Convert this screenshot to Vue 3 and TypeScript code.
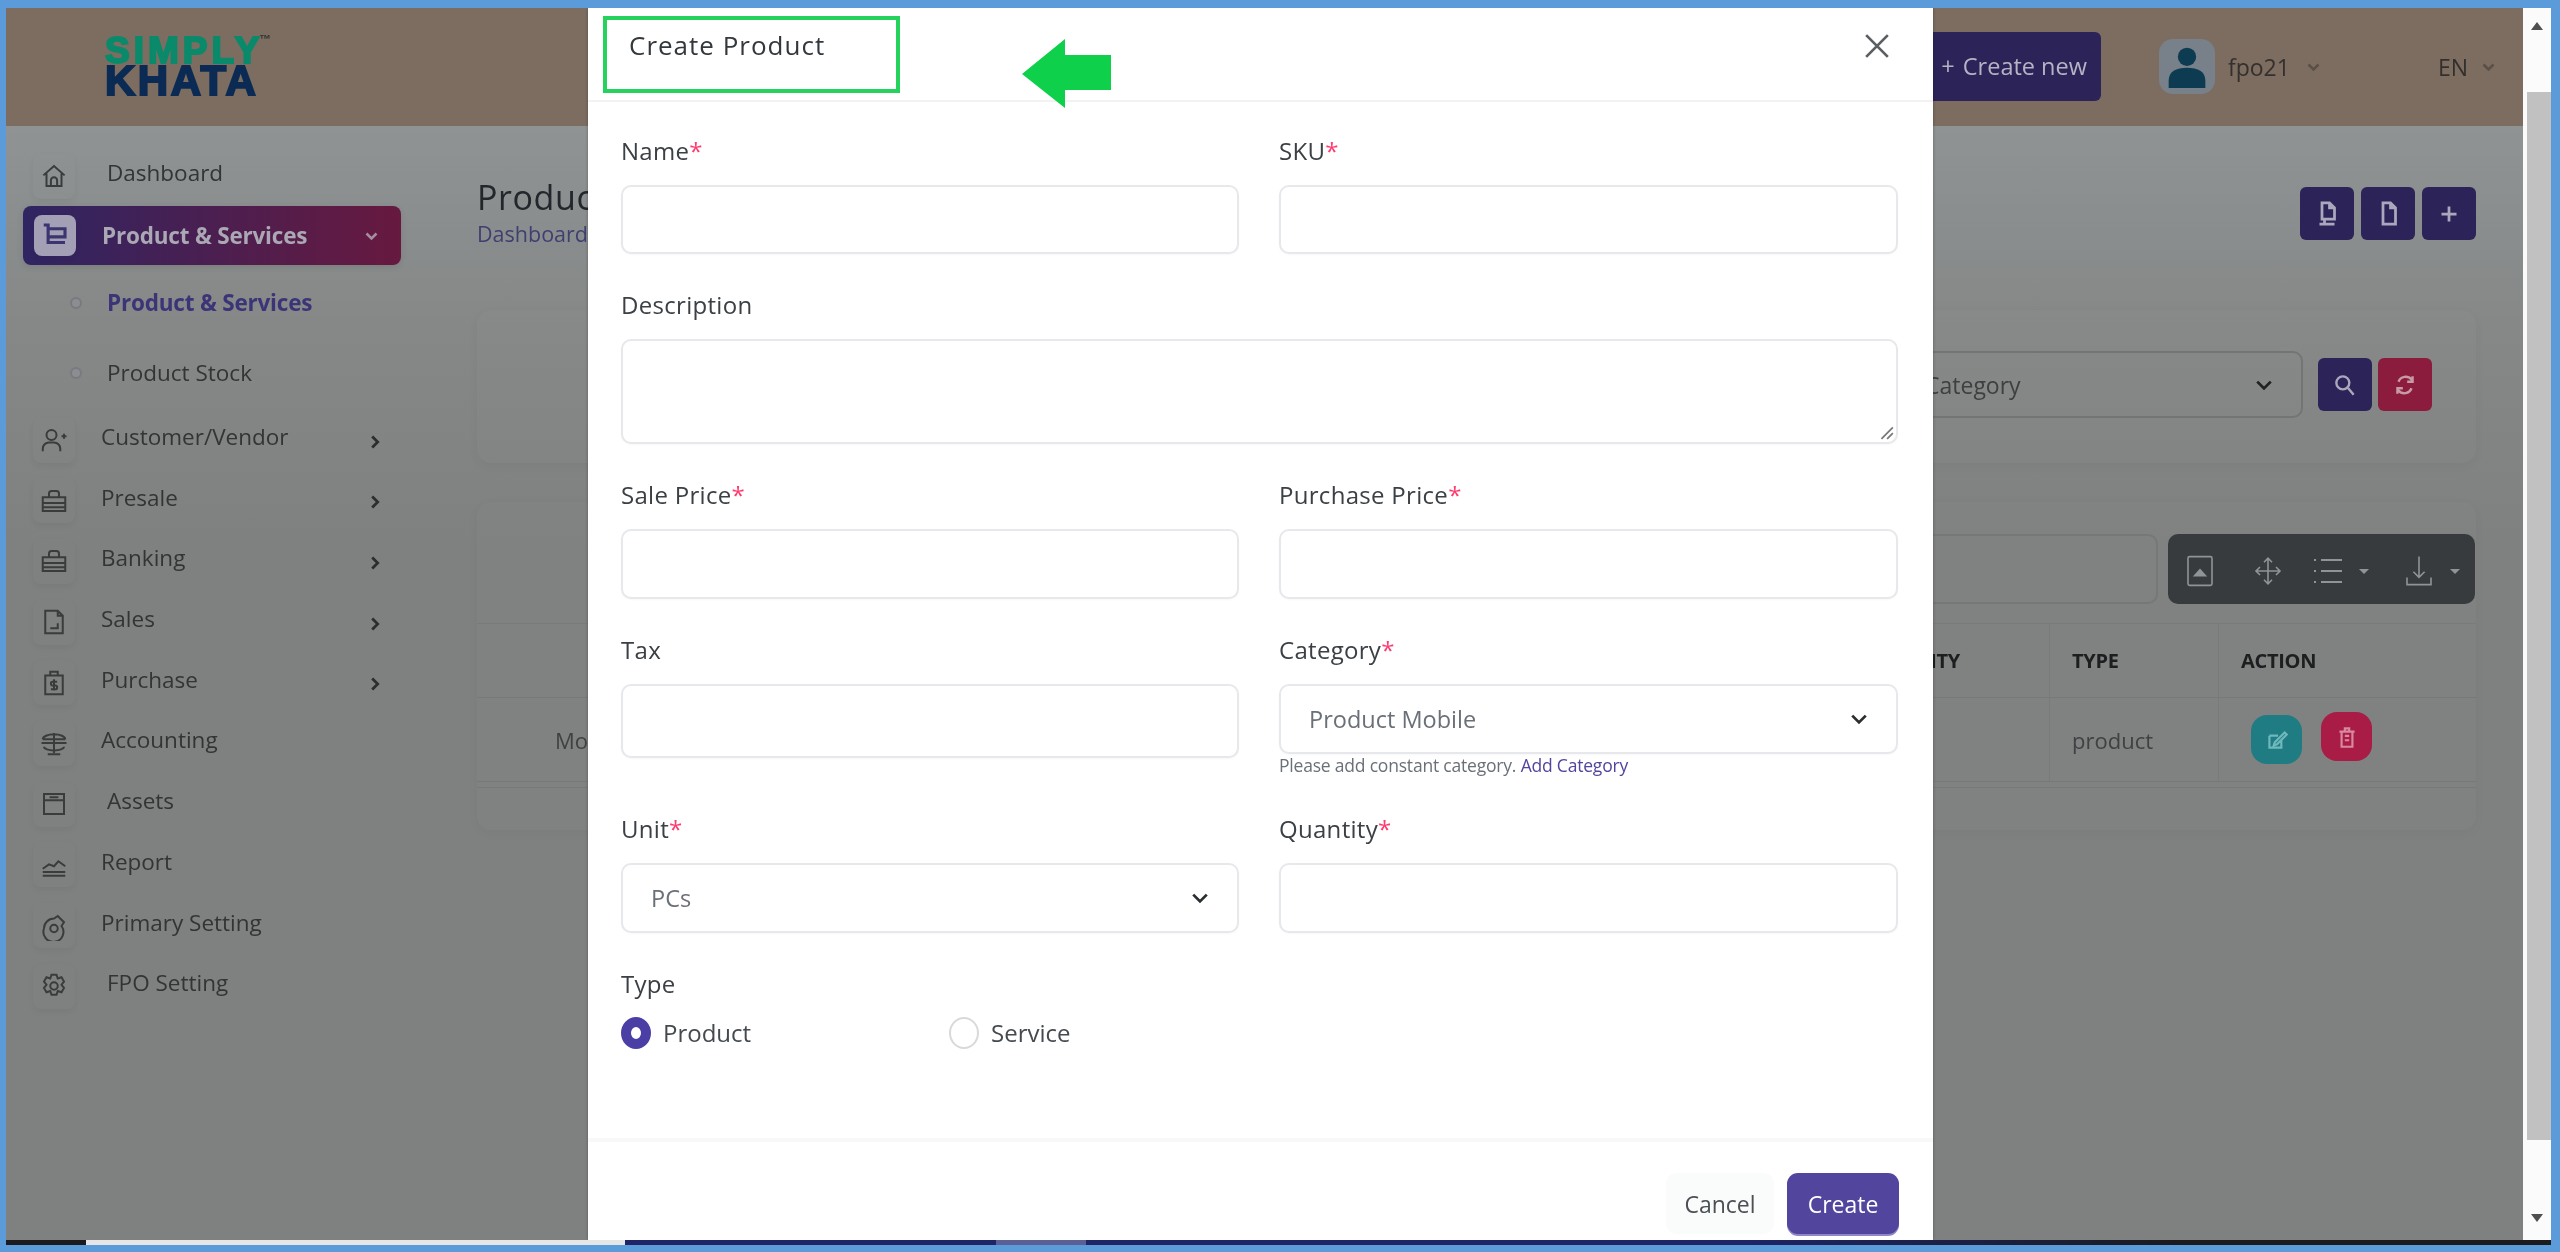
<script setup lang="ts">
const icons: Record<string, string> = {
  home: 'M3.5 11.5 12 4l8.500 7.500M6 10v10h12V10M9.500 20v-4.500a2.500 2.500 0 0 1 5 0V20',
  cart: 'M3 4h3.500v14H20M6.500 7H20v6.500H6.500M8.500 21h.01M17.500 21h.01',
  userplus: 'M6 8a4 4 0 1 0 8 0a4 4 0 1 0-8 0M3 21v-2a5 5 0 0 1 5-5h4a5 5 0 0 1 5 5v2M18 9h4M20 7v4',
  case: 'M3 9h18v11H3zM8 9V6a2 2 0 0 1 2-2h4a2 2 0 0 1 2 2v3M3 13.500h18M3 17h18',
  file: 'M5 3h10l4 4v14H5zM15 3v4h4M9 17h6v-4',
  dollar: 'M5 6h14v15H5zM9 6V3h6v3M12 9v9M14.500 11H11a1.500 1.500 0 0 0 0 3h2a1.500 1.500 0 0 1 0 3H9.500',
  scale: 'M12 4v16M7 21h10M3 9h18M3 9a9 4 0 0 1 18 0M2 12h20M4 15a8 3 0 0 0 16 0',
  assets: 'M4 4h16v16H4zM4 9h16M8.500 6.500h7',
  report: 'M3 20.500h18M3 15l5-3.500 4 1.500 3.500-4 5.500 4M3 17.500h18',
  primary: 'M4 14a8 8 0 0 1 8-8l3-2 5 5-2 3a8 8 0 1 1-14 2M9 14a3 3 0 1 0 6 0a3 3 0 1 0-6 0',
  gear: 'M9 12a3 3 0 1 0 6 0a3 3 0 1 0-6 0M10 3h4l1 3 3-1 2 3.500-2 2.500 2 2.500-2 3.500-3-1-1 3h-4l-1-3-3 1-2-3.500 2-2.500-2-2.500L6 5l3 1z',
}

const navTop = [{ icon: 'home', label: 'Dashboard', inset: true, arrow: false }]
const navRest = [
  { icon: 'userplus', label: 'Customer/Vendor', inset: false, arrow: true },
  { icon: 'case', label: 'Presale', inset: false, arrow: true },
  { icon: 'case', label: 'Banking', inset: false, arrow: true },
  { icon: 'file', label: 'Sales', inset: false, arrow: true },
  { icon: 'dollar', label: 'Purchase', inset: false, arrow: true },
  { icon: 'scale', label: 'Accounting', inset: false, arrow: false },
  { icon: 'assets', label: 'Assets', inset: true, arrow: false },
  { icon: 'report', label: 'Report', inset: false, arrow: false },
  { icon: 'primary', label: 'Primary Setting', inset: false, arrow: false },
  { icon: 'gear', label: 'FPO Setting', inset: true, arrow: false },
]
const columns = ['NAME', 'SKU', 'SALE PRICE', 'PURCHASE PRICE', 'TAX', 'CATEGORY', 'UNIT', 'QUANTITY', 'TYPE', 'ACTION']
const cells = ['Mobile', 'M-01', '12000', '10000', '-', 'Product Mobile', 'PCs', '10', 'product']
</script>

<template>
  <div class="frame">
    <div class="window">
      <div class="app">
        <header class="topbar">
          <div class="logo">
            <span class="logo-top">SIMPLY<sup>™</sup></span>
            <span class="logo-bottom">KHATA</span>
          </div>
          <div class="topbar-right">
            <button class="create-new"><span class="plus">+</span>Create new</button>
            <div class="avatar">
              <svg viewBox="0 0 24 24" width="44" height="52"><circle cx="12" cy="7" r="5" fill="#0d3b52" /><path d="M2 24v-4c0-5 4-7 10-7s10 2 10 7v4z" fill="#0d3b52" /></svg>
            </div>
            <span class="user">fpo21</span>
            <svg class="tiny" viewBox="0 0 12 8"><path d="M2 2l4 4 4-4" /></svg>
            <span class="lang">EN</span>
            <svg class="tiny" viewBox="0 0 12 8"><path d="M2 2l4 4 4-4" /></svg>
          </div>
        </header>

        <div class="content">
          <aside class="sidebar">
            <div v-for="n in navTop" :key="n.label" class="nav-item">
              <span class="nav-icon"><svg viewBox="0 0 24 24"><path :d="icons[n.icon]" /></svg></span>
              <span class="nav-label inset">{{ n.label }}</span>
            </div>
            <div class="nav-active">
              <span class="nav-icon light"><svg viewBox="0 0 24 24"><path :d="icons.cart" /></svg></span>
              <span class="nav-active-label">Product &amp; Services</span>
              <svg class="active-chevron" viewBox="0 0 12 8"><path d="M2 2l4 4 4-4" /></svg>
            </div>
            <div class="sub-item current"><i class="dot"></i>Product &amp; Services</div>
            <div class="sub-item"><i class="dot"></i>Product Stock</div>
            <div v-for="n in navRest" :key="n.label" class="nav-item">
              <span class="nav-icon"><svg viewBox="0 0 24 24"><path :d="icons[n.icon]" /></svg></span>
              <span class="nav-label" :class="{ inset: n.inset }">{{ n.label }}</span>
              <svg v-if="n.arrow" class="nav-arrow" viewBox="0 0 10 14"><path d="M2 2l5 5-5 5" /></svg>
            </div>
          </aside>

          <main class="main">
            <div class="page-head">
              <div>
                <h1>Product &amp; Services</h1>
                <div class="crumb">Dashboard &gt; Product &amp; Services</div>
              </div>
              <div class="head-actions">
                <button class="square"><svg viewBox="0 0 24 24"><path d="M8 3h6l4 4v9H8zM14 3v4h4M6 20h12M10 20v-4" /></svg></button>
                <button class="square"><svg viewBox="0 0 24 24"><path d="M8 3h6l4 4v13H8zM14 3v4h4M15 20h4" /></svg></button>
                <button class="square"><svg viewBox="0 0 24 24"><path d="M12 6v12M6 12h12" /></svg></button>
              </div>
            </div>

            <section class="card filter-card">
              <div class="filter-select">
                <span>Category</span>
                <svg viewBox="0 0 16 10"><path d="M2 2l6 6 6-6" /></svg>
              </div>
              <button class="square small"><svg viewBox="0 0 24 24"><path d="M4 10a6 6 0 1 0 12 0a6 6 0 1 0-12 0M15 15l5 6" /></svg></button>
              <button class="square small red"><svg viewBox="0 0 24 24"><path d="M6 9a7 7 0 0 1 12-2l1 2M18 15a7 7 0 0 1-12 2l-1-2M19 4v5h-5M5 20v-5h5" /></svg></button>
            </section>

            <section class="card table-card">
              <div class="table-tools">
                <div class="table-search"></div>
                <div class="toolbar">
                  <svg class="tool" viewBox="0 0 34 40"><rect x="2" y="2" width="30" height="36" rx="2" /><path class="solid" d="M8 27l9-10 9 10z" /></svg>
                  <svg class="tool" viewBox="0 0 36 40"><path d="M18 4v32M3 20h30M13 9l5-5 5 5M13 31l5 5 5-5M8 15l-5 5 5 5M28 15l5 5-5 5" /></svg>
                  <span class="tool-group list-group"><svg class="tool" viewBox="0 0 32 30"><path d="M9 4h21M9 15h21M9 26h21M2 4h2M2 15h2M2 26h2" /></svg><i class="caret"></i></span>
                  <span class="tool-group download-group"><svg class="tool" viewBox="0 0 34 40"><path d="M17 2v26M10 21l7 7 7-7M2 28v9h30v-9" /></svg><i class="caret"></i></span>
                </div>
              </div>
              <div class="table-row head">
                <div v-for="c in columns" :key="c" class="cell">{{ c }}</div>
              </div>
              <div class="table-row body">
                <div v-for="c in cells" :key="c" class="cell">{{ c }}</div>
                <div class="cell actions">
                  <button class="round teal"><svg viewBox="0 0 24 24"><path d="M5 8h8M5 8v11h11v-7M10 14l9-9 2 2-9 9-3 1z" /></svg></button>
                  <button class="round pink"><svg viewBox="0 0 24 24"><path d="M7 7h10v14H7zM5 7h14M10 7V4h4v3M10 11h4M10 15h4" /></svg></button>
                </div>
              </div>
              <div class="table-foot"></div>
            </section>
          </main>
        </div>

        <div class="modal">
          <div class="modal-head">
            <h2>Create Product</h2>
            <svg class="close" viewBox="0 0 24 24"><path d="M2 2l20 20M22 2L2 22" /></svg>
          </div>
          <div class="annotation-box"></div>
          <svg class="annotation-arrow" viewBox="0 0 89 69"><path d="M0 35 43 0v16h46v35H43v18z" /></svg>

          <form class="modal-body">
            <label class="field"><span class="lbl">Name<em>*</em></span><span class="input"></span></label>
            <label class="field"><span class="lbl">SKU<em>*</em></span><span class="input"></span></label>
            <label class="field wide">
              <span class="lbl">Description</span>
              <span class="input area">
                <svg class="grip" viewBox="0 0 14 14"><path d="M13 3L3 13M13 8l-5 5" /></svg>
              </span>
            </label>
            <label class="field"><span class="lbl">Sale Price<em>*</em></span><span class="input tall"></span></label>
            <label class="field"><span class="lbl">Purchase Price<em>*</em></span><span class="input tall"></span></label>
            <label class="field"><span class="lbl">Tax</span><span class="input tax"></span></label>
            <div class="field">
              <span class="lbl">Category<em>*</em></span>
              <span class="input tall select">Product Mobile<svg viewBox="0 0 16 10"><path d="M2 2l6 6 6-6" /></svg></span>
              <span class="help">Please add constant category. <a>Add Category</a></span>
            </div>
            <label class="field"><span class="lbl">Unit<em>*</em></span><span class="input tall select">PCs<svg viewBox="0 0 16 10"><path d="M2 2l6 6 6-6" /></svg></span></label>
            <label class="field"><span class="lbl">Quantity<em>*</em></span><span class="input tall"></span></label>
            <div class="field wide">
              <span class="lbl type-label">Type</span>
              <div class="radios">
                <span class="radio-item"><i class="radio on"></i>Product</span>
                <span class="radio-item"><i class="radio"></i>Service</span>
              </div>
            </div>
          </form>

          <div class="modal-foot">
            <button class="btn-cancel">Cancel</button>
            <button class="btn-create">Create</button>
          </div>
        </div>
      </div>

      <div class="scrollbar">
        <i class="arrow-up"></i>
        <div class="thumb"></div>
        <i class="arrow-down"></i>
      </div>
    </div>
    <div class="taskbar">
      <i class="seg black"></i><i class="seg pale"></i><i class="seg navy-a"></i><i class="seg lit"></i><i class="seg navy-b"></i>
    </div>
  </div>
</template>

<style scoped>
* { box-sizing: border-box; }
.frame {
  width: 2560px; height: 1252px; display: flex; flex-direction: column;
  padding: 8px 9px 7px 6px; background: #5b9bd9;
  font-family: "Open Sans", "Liberation Sans", sans-serif; overflow: hidden;
  filter: blur(.6px);
}
.window { flex: 1; min-height: 0; display: flex; }
.app { position: relative; flex: 1; min-width: 0; display: flex; flex-direction: column; overflow: hidden; background: #7f8080; }

.topbar { height: 118px; flex: none; background: #7c6d60; display: flex; align-items: center; justify-content: space-between; padding: 0 27px 0 99px; }
.logo { display: flex; flex-direction: column; font-family: "Liberation Sans", sans-serif; font-weight: 700; margin-top: -2px; }
.logo-top { color: #0a8a6b; font-size: 37px; line-height: 30px; letter-spacing: 4px; -webkit-text-stroke: 2px #0a8a6b; }
.logo-top sup { font-size: 12px; color: #333; vertical-align: 20px; line-height: 0; -webkit-text-stroke: 0; letter-spacing: 0; margin-left: -4px; }
.logo-bottom { color: #0b2b55; font-size: 42px; line-height: 30px; letter-spacing: 2.500px; -webkit-text-stroke: 2px #0b2b55; }
.topbar-right { display: flex; align-items: center; }
.create-new { height: 69px; width: 200px; margin-right: 58px; margin-top: -2px; border: 0; border-radius: 6px; background: #2c2458; color: #b6b3c4; font: 23.500px "Open Sans", sans-serif; text-align: right; padding: 0 14px 0 0; white-space: nowrap; }
.plus { margin-right: 8px; }
.avatar { width: 56px; height: 55px; border-radius: 14px; background: #78808a; display: flex; align-items: center; justify-content: center; margin-right: 13px; margin-top: -2px; }
.user { font-size: 23px; color: #35302d; margin-right: 16px; }
.lang { font-size: 23px; color: #332f2c; margin-left: 117px; margin-right: 13px; }
.tiny { width: 15px; height: 10px; fill: none; stroke: #5a5048; stroke-width: 2; }

.content { flex: 1; min-height: 0; display: flex; background: linear-gradient(180deg, #8f9393 0, #868888 200px, #7f8080 420px); }

.sidebar { width: 471px; flex: none; padding: 20px 0 0 17px; color: #333535; }
.nav-item { height: 60.700px; display: flex; align-items: center; position: relative; font-size: 22.500px; }
.nav-icon { width: 42px; height: 45px; margin-left: 10px; flex: none; display: flex; align-items: center; justify-content: center; border-radius: 8px; box-shadow: 0 3px 6px rgba(0,0,0,.05); }
.nav-icon svg { width: 30px; height: 30px; fill: none; stroke: #3a3c3c; stroke-width: 1.600; }
.nav-label { margin-left: 26px; line-height: 30px; margin-top: -6px; white-space: nowrap; }
.nav-label.inset { margin-left: 32px; }
.nav-arrow { position: absolute; left: 347px; top: 24px; width: 11px; height: 16px; fill: none; stroke: #2c2e2e; stroke-width: 2.500; }
.nav-active { height: 59px; width: 378px; margin: -1px 0 0; display: flex; align-items: center; position: relative; border-radius: 8px; background: linear-gradient(90deg, #2f2562, #67193f); box-shadow: 0 2px 6px rgba(0,0,0,.1); }
.nav-icon.light { background: #a3a0b5; height: 41px; margin-left: 11px; }
.nav-icon.light svg { stroke: #3b3470; stroke-width: 2.500; }
.nav-active-label { margin-left: 26px; color: #aaa8b4; font-weight: 700; font-size: 22.500px; letter-spacing: -.200px; white-space: nowrap; }
.active-chevron { position: absolute; left: 341px; top: 25px; width: 15px; height: 10px; fill: none; stroke: #a68ea0; stroke-width: 2; }
.sub-item { height: 69px; display: flex; align-items: center; font-size: 22.500px; padding-left: 84px; position: relative; margin-top: 1px; }
.sub-item.current { color: #3b3578; font-weight: 700; letter-spacing: -.200px; margin-top: 3px; }
.dot { position: absolute; left: 47px; top: 29px; width: 12px; height: 12px; border-radius: 50%; border: 2px solid #777b80; background: #8b8d90; }
.sub-item + .nav-item { margin-top: 3px; }

.main { flex: 1; min-width: 0; padding: 51px 47px 0 0; }
.page-head { display: flex; justify-content: space-between; align-items: flex-start; height: 133px; }
h1 { margin: 0; font-size: 34px; letter-spacing: .6px; font-weight: 400; line-height: 40px; color: #23262a; }
.crumb { font-size: 21.500px; line-height: 28px; margin-top: 3px; color: #3f3f70; }
.head-actions { display: flex; gap: 7px; margin-top: 10px; }
.square { width: 54px; height: 53px; border: 0; border-radius: 6px; background: #2c2458; padding: 0; display: flex; align-items: center; justify-content: center; }
.square svg { width: 30px; height: 30px; fill: none; stroke: #aba8bd; stroke-width: 2.200; }
.square.small svg { width: 26px; height: 26px; }
.square.red { background: #8c1c3e; }
.square.red svg { stroke: #c89aa8; }
.card { background: rgba(255,255,255,.012); border-radius: 14px; box-shadow: 0 3px 12px rgba(0,0,0,.035); }
.filter-card { height: 153px; display: flex; align-items: center; justify-content: flex-end; gap: 6px; padding-right: 44px; margin-bottom: 39px; }
.filter-select { width: 500px; height: 67px; margin-right: 9px; margin-top: -4px; border: 2px solid #737575; border-radius: 10px; display: flex; align-items: center; justify-content: space-between; padding: 0 28px; font-size: 23px; color: #3d3f40; }
.filter-select span { margin-left: 92px; }
.filter-select svg { width: 18px; height: 12px; fill: none; stroke: #1f2122; stroke-width: 2.500; }
.filter-card .square { margin-top: -4px; }
.table-card { height: 328px; padding-top: 32px; }
.table-tools { display: flex; justify-content: flex-end; gap: 10px; padding-right: 1px; height: 70px; margin-bottom: 19px; }
.table-search { width: 500px; border: 2px solid #767878; border-radius: 10px; }
.toolbar { width: 307px; background: #383b3d; border-radius: 10px; display: flex; align-items: center; padding: 3px 0 0 16px; gap: 36px; }
.tool { height: 32px; width: 32px; flex: none; fill: none; stroke: #8f9496; stroke-width: 2; }
.tool .solid { fill: #8f9496; stroke: none; }
.tool-group { display: flex; align-items: center; gap: 15px; }
.caret { width: 0; height: 0; border: 5px solid transparent; border-top-color: #8f9496; margin-top: 6px; }
.list-group { margin-left: -8px; }
.download-group { margin-left: -2px; }
.table-row { display: grid; grid-template-columns: 300px 200px 200px 240px 130px 190px 99px 213px 169px 258px; }
.table-row.head { height: 74px; font-weight: 700; font-size: 20px; color: #1c1e1f; letter-spacing: -.300px; border-top: 1px solid #797b7b; }
.table-row.head .cell:first-child { padding-left: 130px; }
.table-row.body { height: 85px; font-size: 22px; color: #3f4142; border-top: 1px solid #777979; border-bottom: 1px solid #777979; }
.cell { padding-left: 22px; display: flex; align-items: center; border-left: 1px solid #797b7b; white-space: nowrap; }
.cell:first-child { padding-left: 78px; border-left: 0; }
.actions { padding-left: 32px; gap: 19px; }
.round { border: 0; padding: 0; width: 51px; height: 49px; border-radius: 16px; display: flex; align-items: center; justify-content: center; }
.round svg { width: 26px; height: 26px; fill: none; stroke: #6fb8bc; stroke-width: 2; }
.teal { background: #1f7c82; }
.pink { background: #a81c46; margin-top: -6px; }
.pink svg { stroke: #d8899f; }
.table-foot { height: 6px; border-bottom: 1px solid #777979; }

.modal { position: absolute; left: 582px; top: 0; bottom: 0; width: 1345px; background: #fff; display: flex; flex-direction: column; box-shadow: 0 0 3px rgba(0,0,0,.3); }
.modal-head { height: 94px; flex: none; border-bottom: 2px solid #f2f2f2; position: relative; padding: 19px 0 0 41px; }
h2 { margin: 0; font-size: 26px; letter-spacing: 1px; line-height: 36px; font-weight: 400; color: #33383c; }
.close { position: absolute; right: 43px; top: 25px; width: 26px; height: 26px; fill: none; stroke: #5b5f62; stroke-width: 2.500; }
.annotation-box { position: absolute; left: 15px; top: 8px; width: 297px; height: 77px; border: 4px solid #24d25c; }
.annotation-arrow { position: absolute; left: 434px; top: 31px; width: 89px; height: 69px; fill: #0fd04a; }
.modal-body { flex: 1; display: grid; grid-template-columns: 618px 619px; column-gap: 40px; row-gap: 35px; align-content: start; padding: 33px 0 0 33px; }
.field { display: flex; flex-direction: column; }
.wide { grid-column: 1 / -1; }
.lbl { height: 32px; line-height: 32px; margin-bottom: 18px; font-size: 24px; letter-spacing: .3px; color: #3b4045; }
.lbl em { color: #ff3a6e; font-style: normal; }
.input { display: block; height: 69px; border: 2px solid #e6e8eb; border-radius: 10px; background: #fff; box-shadow: 0 1px 2px rgba(0,0,0,.03); }
.input.area { height: 105px; position: relative; }
.input.tall { height: 70px; }
.input.tax { height: 74px; }
.grip { position: absolute; right: 2px; bottom: 2px; width: 16px; height: 16px; fill: none; stroke: #777; stroke-width: 1.500; }
.select { display: flex; align-items: center; justify-content: space-between; padding: 0 28px 0 28px; font-size: 23.500px; color: #6a7077; }
.select svg { width: 18px; height: 12px; fill: none; stroke: #2b2e31; stroke-width: 2.500; }
.help { font-size: 17.500px; line-height: 22px; height: 24px; color: #6a7077; letter-spacing: -.200px; white-space: nowrap; }
.help a { color: #51459d; }
.type-label { margin-bottom: 17px; }
.radios { display: flex; }
.radio-item { width: 328px; display: flex; align-items: center; gap: 12px; font-size: 24px; color: #454a4f; line-height: 32px; }
.radio { width: 30px; height: 32px; border-radius: 50%; border: 2px solid #d9d9d9; }
.radio.on { border: 10px solid #4b3fa6; }
.modal-foot { height: 102px; flex: none; border-top: 4px solid #f8f8f8; display: flex; justify-content: flex-end; gap: 13px; padding: 31px 34px 0 0; }
.modal-foot button { height: 61px; border: 0; border-radius: 11px; font: 23px "Open Sans", sans-serif; padding: 0; }
.btn-cancel { width: 108px; background: #fafbfb; color: #4b5054; }
.btn-create { width: 112px; background: #51459d; color: #fff; box-shadow: 0 2px 0 #8f86c8; }

.scrollbar { width: 28px; flex: none; background: #fbfbfb; display: flex; flex-direction: column; align-items: center; padding-top: 14px; }
.thumb { align-self: flex-end; width: 24px; height: 1048px; margin-top: 62px; background: #c1c1c1; }
.arrow-up { width: 0; height: 0; border: 6px solid transparent; border-top: 0; border-bottom: 8px solid #4f4f4f; }
.arrow-down { width: 0; height: 0; margin-top: 74px; border: 6px solid transparent; border-bottom: 0; border-top: 8px solid #4f4f4f; }

.taskbar { height: 5px; flex: none; display: flex; }
.seg { display: block; height: 100%; }
.black { width: 80px; background: #1b1b1d; }
.pale { width: 539px; background: #e6e6e6; }
.navy-a { width: 371px; background: #1e2466; }
.lit { width: 90px; background: #5a6096; }
.navy-b { flex: 1; background: linear-gradient(90deg, #1e2466 0, #1e2466 45%, #1b1b1d 75%); }
</style>

<style>
html, body { margin: 0; overflow: hidden; background: #5b9bd9; }
</style>
